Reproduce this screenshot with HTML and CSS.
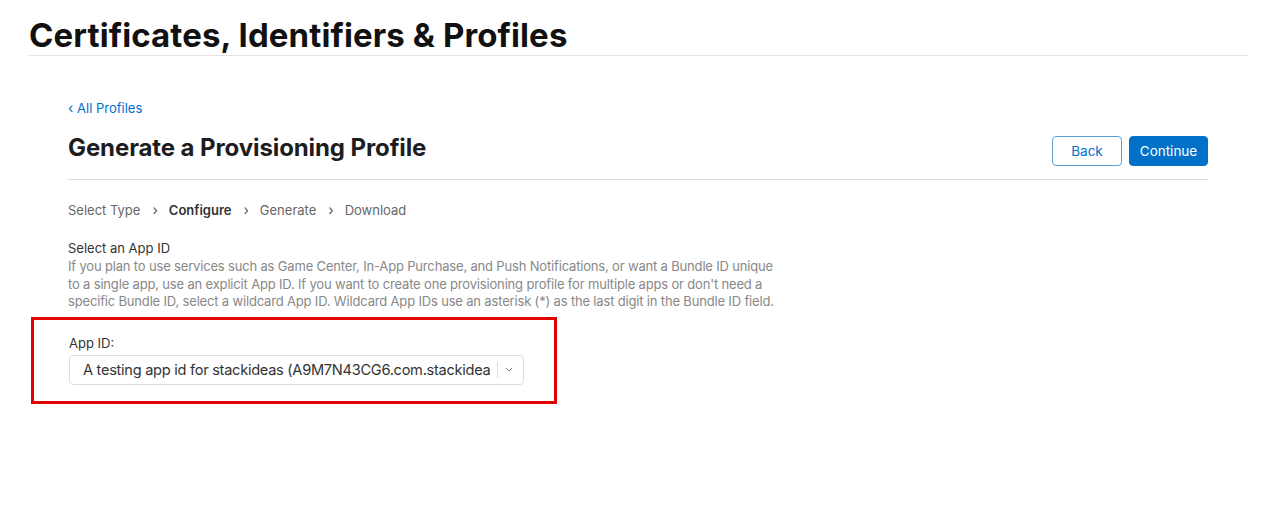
FILE: index.html
```html
<!DOCTYPE html>
<html>
<head>
<meta charset="utf-8">
<link rel="stylesheet" href="styles.css">
</head>
<body>
<header class="site-header">
  <h1 class="site-title">Certificates, Identifiers &amp; Profiles</h1>
</header>
<main class="content">
  <a class="back-link" href="#"><span class="back-chev">‹</span> All Profiles</a>
  <div class="page-head">
    <h2 class="page-title">Generate a Provisioning Profile</h2>
    <div class="actions">
      <button class="btn btn-secondary">Back</button>
      <button class="btn btn-primary">Continue</button>
    </div>
  </div>
  <nav class="steps">
    <span class="step">Select Type</span>
    <span class="sep">›</span>
    <span class="step current">Configure</span>
    <span class="sep">›</span>
    <span class="step">Generate</span>
    <span class="sep">›</span>
    <span class="step">Download</span>
  </nav>
  <section class="section">
    <h3 class="section-title">Select an App ID</h3>
    <p class="section-desc">If you plan to use services such as Game Center, In-App Purchase, and Push Notifications, or want a Bundle ID unique to a single app, use an explicit App ID. If you want to create one provisioning profile for multiple apps or don't need a specific Bundle ID, select a wildcard App ID. Wildcard App IDs use an asterisk (*) as the last digit in the Bundle ID field.</p>
  </section>
  <div class="highlight">
    <label class="field-label">App ID:</label>
    <div class="select">
      <span class="select-value">A testing app id for stackideas (A9M7N43CG6.com.stackidea</span>
      <span class="select-divider"></span>
      <svg class="select-chev" width="8" height="5" viewBox="0 0 8 5"><path d="M1 1 L4 4 L7 1" fill="none" stroke="#888" stroke-width="1"/></svg>
    </div>
  </div>
</main>
</body>
</html>
```
FILE: styles.css
```css
* { box-sizing: border-box; }
html, body { margin: 0; padding: 0; background: #fff; }
body {
  font-family: Inter, "Noto Sans", sans-serif;
  color: #333;
  -webkit-font-smoothing: antialiased;
}
.site-header {
  margin: 0 34px 0 29px;
  padding-top: 15px;
  border-bottom: 1px solid #e3e3e3;
}
.site-title {
  margin: 0;
  font-size: 33px;
  line-height: 40px;
  font-weight: 700;
  letter-spacing: 0.1px;
  color: #111;
}
.content {
  margin: 0 74px 0 68px;
  padding-top: 41px;
}
.back-link {
  display: inline-block;
  font-size: 13px;
  line-height: 16px;
  color: #0070c9;
  text-decoration: none;
}
.back-chev { font-size: 14px; }
.page-head {
  display: flex;
  align-items: flex-start;
  justify-content: space-between;
  margin-top: 16px;
  padding-bottom: 13px;
  border-bottom: 1px solid #dcdcdc;
}
.page-title {
  margin: 0;
  font-size: 24px;
  line-height: 30px;
  font-weight: 700;
  letter-spacing: -0.1px;
  color: #1d1d1f;
}
.actions { display: flex; gap: 7px; margin-top: 3px; }
.btn {
  height: 30px;
  border-radius: 4px;
  font-family: inherit;
  font-size: 13.5px;
  padding: 0;
}
.btn-secondary {
  width: 70px;
  background: #fff;
  color: #0070c9;
  border: 1px solid #5e9fd8;
}
.btn-primary {
  width: 79px;
  background: #0070c9;
  color: #fff;
  border: 1px solid #0070c9;
}
.steps {
  display: flex;
  align-items: center;
  margin-top: 21px;
  font-size: 13px;
  line-height: 18px;
  color: #666;
}
.step.current { font-weight: 600; color: #333; }
.sep { margin: 0 11px 0 12px; color: #555; font-size: 14px; }
.section { margin-top: 20px; }
.section-title {
  margin: 0;
  font-size: 13px;
  line-height: 18px;
  font-weight: 400;
  color: #333;
}
.section-desc {
  margin: 1px 0 0;
  max-width: 712px;
  font-size: 13px;
  line-height: 17.5px;
  letter-spacing: -0.17px;
  color: #888;
}
.highlight {
  margin: 6px 0 0 -37px;
  width: 526px;
  height: 87px;
  border: 3px solid #e00000;
  padding: 14px 0 0 35px;
}
.field-label {
  display: block;
  font-size: 13px;
  line-height: 18px;
  color: #333;
}
.select {
  margin-top: 3px;
  width: 455px;
  height: 30px;
  border: 1px solid #dedede;
  border-radius: 4px;
  display: flex;
  align-items: center;
  padding: 0 10px 0 13px;
}
.select-value {
  flex: 1;
  min-width: 0;
  white-space: nowrap;
  overflow: hidden;
  font-size: 14.6px;
  letter-spacing: -0.28px;
  color: #333;
}
.select-divider {
  width: 1px;
  height: 16px;
  background: #ddd;
  margin: 0 7px 0 6px;
}
.select-chev { display: block; }
```
